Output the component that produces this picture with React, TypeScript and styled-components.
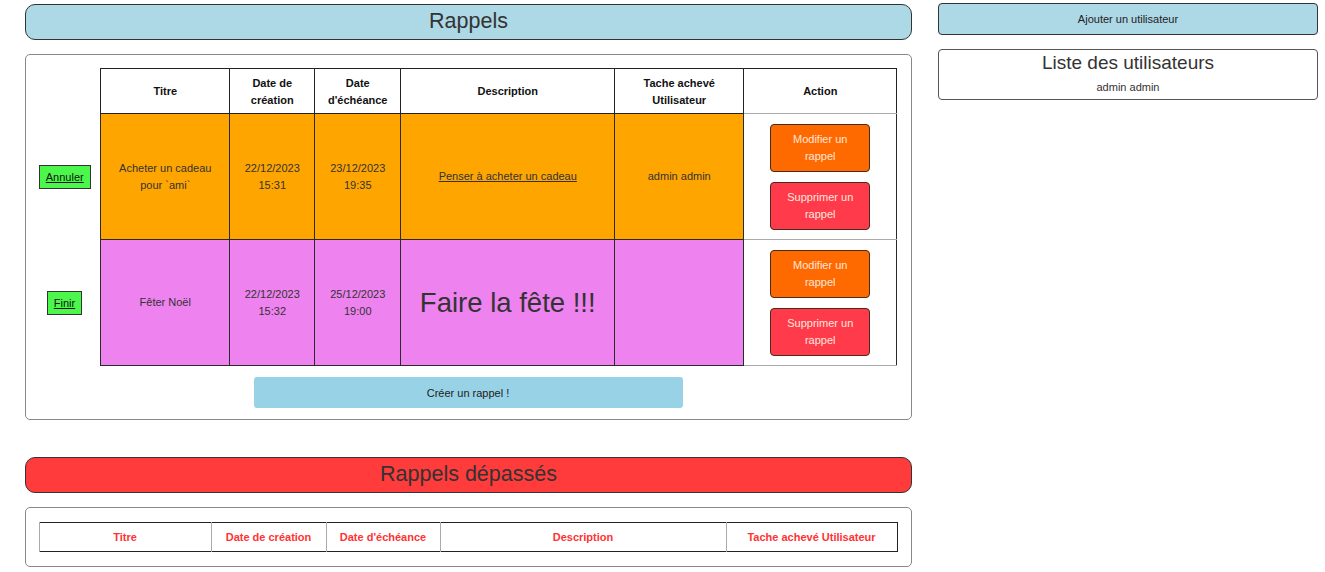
import React from 'react';
import styled, { createGlobalStyle } from 'styled-components';

const GlobalStyle = createGlobalStyle`
  body {
    margin: 0;
    font-family: "Liberation Sans", Arial, sans-serif;
    color: #333;
    background: #fff;
  }
`;

const Page = styled.div`
  display: flex;
  align-items: flex-start;
  gap: 26px;
  padding: 3px 7px 0 25px;
`;

const MainCol = styled.div`
  width: 887px;
  display: flex;
  flex-direction: column;
  padding-top: 1px;
`;

const SideCol = styled.div`
  width: 380px;
  display: flex;
  flex-direction: column;
  gap: 14px;
`;

const Banner = styled.h2<{ $tone: 'blue' | 'red' }>`
  margin: 0;
  height: 36px;
  box-sizing: border-box;
  border: 1px solid #333;
  border-radius: 10px;
  background: ${(p) => (p.$tone === 'blue' ? '#add8e6' : '#ff3b3b')};
  font-size: 21.5px;
  font-weight: normal;
  line-height: 33px;
  text-align: center;
  color: #333;
`;

const Panel = styled.div<{ $gapBottom?: number; $pad: string }>`
  margin-top: 14px;
  margin-bottom: ${(p) => p.$gapBottom ?? 0}px;
  border: 1px solid #888;
  border-radius: 5px;
  padding: ${(p) => p.$pad};
  display: flex;
  flex-direction: column;
  align-items: center;
`;

const Table = styled.table`
  border-collapse: collapse;
  table-layout: fixed;
  width: 858px;
  font-size: 11px;
  line-height: 16.5px;
  text-align: center;
`;

const Th = styled.th<{ $bare?: boolean }>`
  font-weight: bold;
  color: #111;
  padding: 6px 8px 5px;
  border: ${(p) => (p.$bare ? 'none' : '1px solid #222')};
  &:last-child {
    border-bottom-color: #aaa;
  }
`;

const SideCell = styled.td`
  border: none;
  padding: 0 10px 0 0;
`;

const Cell = styled.td<{ $bg: string }>`
  background: ${(p) => p.$bg};
  border: 1px solid #2a2a2a;
  padding: 6px 8px;
  color: #333;
`;

const ActionCell = styled.td`
  border: 1px solid #2a2a2a;
  border-top-color: #aaa;
  border-bottom-color: #aaa;
  padding: 10px 0 9px;
  text-align: center;
`;

const StatusButton = styled.button`
  font-family: inherit;
  font-size: 11px;
  line-height: 14px;
  color: #111;
  text-decoration: underline;
  background: #4cf74c;
  border: 1px solid #333;
  padding: 4px 6px;
  cursor: pointer;
`;

const ActionButton = styled.button<{ $kind: 'edit' | 'delete' }>`
  display: block;
  margin: 0 auto;
  width: 100px;
  box-sizing: border-box;
  font-family: inherit;
  font-size: 11px;
  line-height: 17px;
  color: #ffe6dc;
  background: ${(p) => (p.$kind === 'edit' ? '#ff6a00' : '#ff3b4b')};
  border: 1px solid #4a2a1a;
  border-radius: 4px;
  padding: 6px 8px;
  cursor: pointer;
  & + & {
    margin-top: 10px;
  }
`;

const LinkText = styled.a`
  color: #333;
  text-decoration: underline;
`;

const BigText = styled.span`
  font-size: 27.5px;
  line-height: 32px;
  color: #333;
`;

const CreateButton = styled.button`
  margin-top: 11px;
  width: 429px;
  height: 31px;
  font-family: inherit;
  font-size: 11px;
  color: #222;
  background: #98d2e6;
  border: none;
  border-radius: 3px;
  cursor: pointer;
`;

const LateTable = styled.table`
  border-collapse: collapse;
  table-layout: fixed;
  width: 858px;
  font-size: 11px;
  text-align: center;
  border: 1px solid #222;
`;

const LateTh = styled.th`
  font-weight: bold;
  color: #ff3333;
  padding: 7px 6px;
  border-left: 1px solid #aaa;
  height: 14px;
`;

const SideButton = styled.button`
  height: 32px;
  font-family: inherit;
  font-size: 11px;
  color: #222;
  background: #add8e6;
  border: 1px solid #333;
  border-radius: 4px;
  cursor: pointer;
`;

const UsersBox = styled.div`
  border: 1px solid #555;
  border-radius: 4px;
  height: 51px;
  box-sizing: border-box;
  text-align: center;
  padding-top: 2px;
`;

const UsersTitle = styled.h3`
  margin: 0;
  font-size: 19px;
  font-weight: normal;
  line-height: 22px;
  color: #333;
`;

const UserName = styled.div`
  margin-top: 6px;
  font-size: 11px;
  line-height: 14px;
  color: #333;
`;

type Reminder = {
  status: string;
  title: string;
  created: [string, string];
  due: [string, string];
  description: React.ReactNode;
  doneBy: string;
  bg: string;
};

const reminders: Reminder[] = [
  {
    status: 'Annuler',
    title: 'Acheter un cadeau pour `ami`',
    created: ['22/12/2023', '15:31'],
    due: ['23/12/2023', '19:35'],
    description: <LinkText>Penser à acheter un cadeau</LinkText>,
    doneBy: 'admin admin',
    bg: '#ffa500',
  },
  {
    status: 'Finir',
    title: 'Fêter Noël',
    created: ['22/12/2023', '15:32'],
    due: ['25/12/2023', '19:00'],
    description: <BigText>Faire la fête !!!</BigText>,
    doneBy: '',
    bg: '#ee82ee',
  },
];

export default function App() {
  return (
    <>
      <GlobalStyle />
      <Page>
        <MainCol>
          <Banner $tone="blue">Rappels</Banner>
          <Panel $gapBottom={37} $pad="13px 14px 11px 13px">
            <Table>
              <colgroup>
                <col style={{ width: 62 }} />
                <col style={{ width: 129 }} />
                <col style={{ width: 85 }} />
                <col style={{ width: 86 }} />
                <col style={{ width: 214 }} />
                <col style={{ width: 129 }} />
                <col style={{ width: 153 }} />
              </colgroup>
              <thead>
                <tr>
                  <Th $bare />
                  <Th>Titre</Th>
                  <Th>Date de création</Th>
                  <Th>Date d'échéance</Th>
                  <Th>Description</Th>
                  <Th>Tache achevé Utilisateur</Th>
                  <Th>Action</Th>
                </tr>
              </thead>
              <tbody>
                {reminders.map((r) => (
                  <tr key={r.title}>
                    <SideCell>
                      <StatusButton>{r.status}</StatusButton>
                    </SideCell>
                    <Cell $bg={r.bg}>{r.title}</Cell>
                    <Cell $bg={r.bg}>
                      {r.created[0]}
                      <br />
                      {r.created[1]}
                    </Cell>
                    <Cell $bg={r.bg}>
                      {r.due[0]}
                      <br />
                      {r.due[1]}
                    </Cell>
                    <Cell $bg={r.bg}>{r.description}</Cell>
                    <Cell $bg={r.bg}>{r.doneBy}</Cell>
                    <ActionCell>
                      <ActionButton $kind="edit">Modifier un rappel</ActionButton>
                      <ActionButton $kind="delete">Supprimer un rappel</ActionButton>
                    </ActionCell>
                  </tr>
                ))}
              </tbody>
            </Table>
            <CreateButton>Créer un rappel !</CreateButton>
          </Panel>

          <Banner $tone="red">Rappels dépassés</Banner>
          <Panel $pad="14px 14px 14px 13px">
            <LateTable>
              <colgroup>
                <col style={{ width: 172 }} />
                <col style={{ width: 115 }} />
                <col style={{ width: 114 }} />
                <col style={{ width: 286 }} />
                <col style={{ width: 171 }} />
              </colgroup>
              <thead>
                <tr>
                  <LateTh>Titre</LateTh>
                  <LateTh>Date de création</LateTh>
                  <LateTh>Date d'échéance</LateTh>
                  <LateTh>Description</LateTh>
                  <LateTh>Tache achevé Utilisateur</LateTh>
                </tr>
              </thead>
            </LateTable>
          </Panel>
        </MainCol>

        <SideCol>
          <SideButton>Ajouter un utilisateur</SideButton>
          <UsersBox>
            <UsersTitle>Liste des utilisateurs</UsersTitle>
            <UserName>admin admin</UserName>
          </UsersBox>
        </SideCol>
      </Page>
    </>
  );
}
